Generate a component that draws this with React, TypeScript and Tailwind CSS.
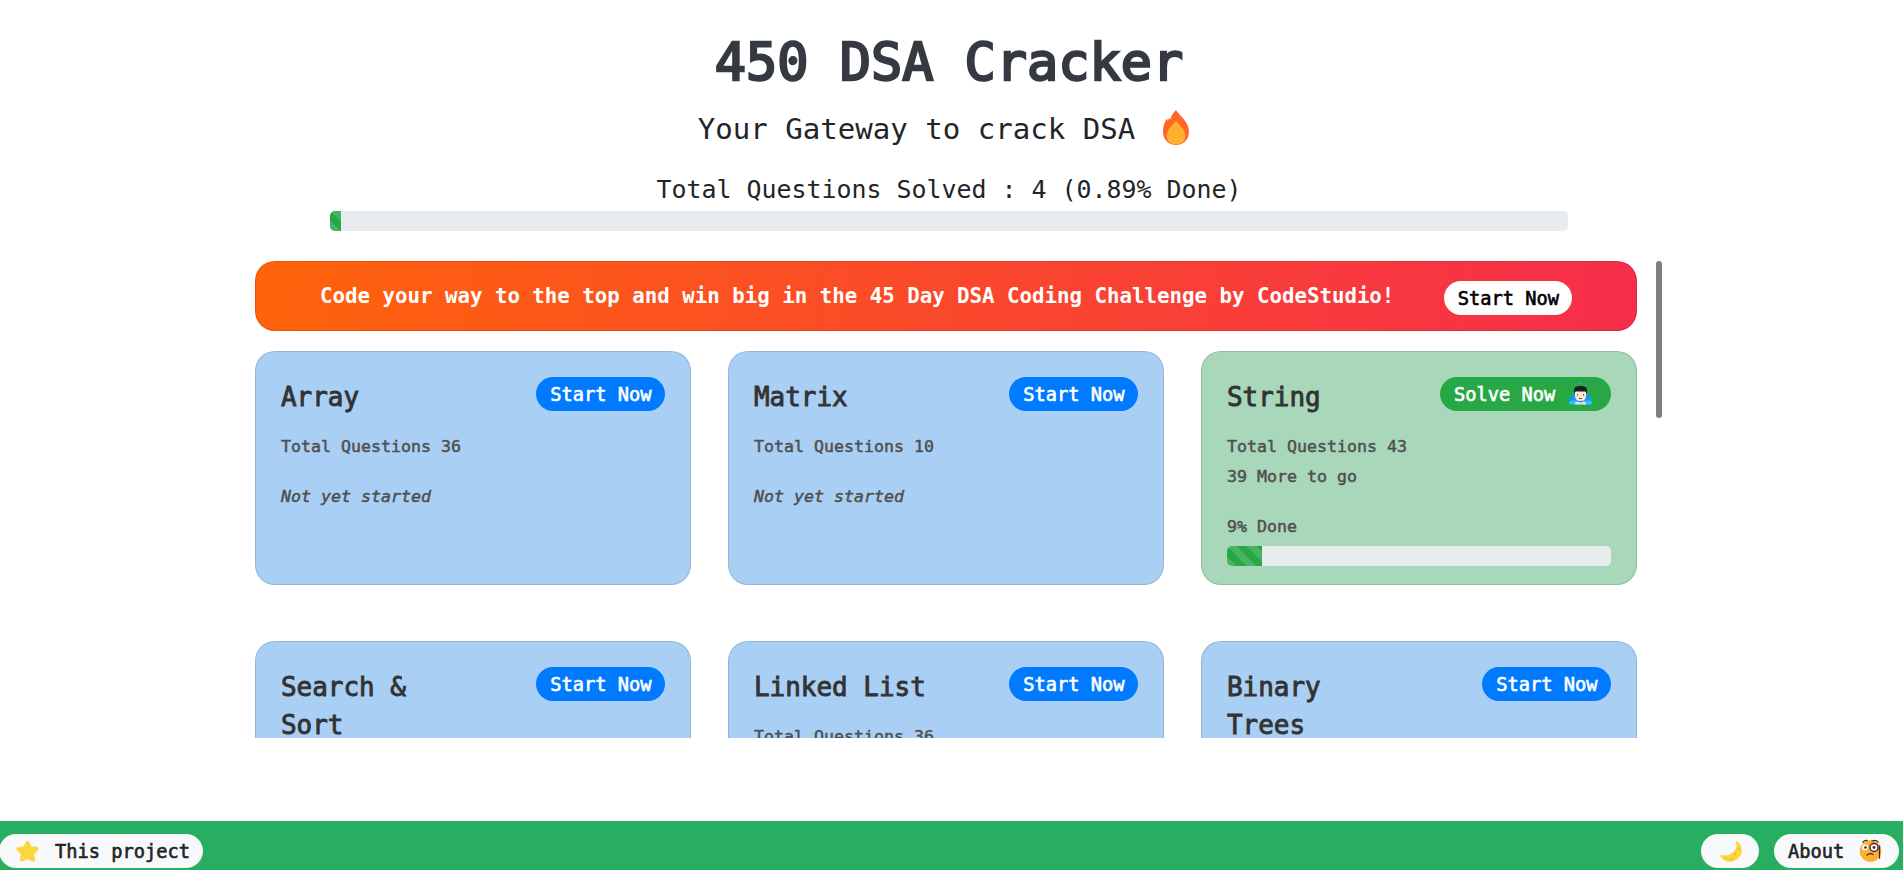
import React from "react";

type Topic = { name: string; total: number; left?: number; percent?: number };

const topics: Topic[] = [
  { name: "Array", total: 36 },
  { name: "Matrix", total: 10 },
  { name: "String", total: 43, left: 39, percent: 9 },
  { name: "Search & Sort", total: 36 },
  { name: "Linked List", total: 36 },
  { name: "Binary Trees", total: 35 },
];

const stripes =
  "bg-[#28a745] bg-[linear-gradient(45deg,rgba(255,255,255,.15)_25%,transparent_25%,transparent_50%,rgba(255,255,255,.15)_50%,rgba(255,255,255,.15)_75%,transparent_75%,transparent)] bg-[length:20px_20px]";

function Progress({ percent }: { percent: number }) {
  return (
    <div className="flex h-5 w-full overflow-hidden rounded-[5px] bg-[#e9ecef]">
      <div className={stripes} style={{ width: `${percent}%` }} />
    </div>
  );
}

function Fire() {
  return (
    <svg viewBox="0 0 26 35" className="h-[35px] w-[26px]">
      <path d="M13 0C16 5 26 12 26 21.500 26 30 20 35 13 35S0 30 0 21.500C0 16 1.500 12 4 8.500l.8 2.500L6 8l1.500 1.500C8 6 10 3 13 0Z" fill="#ff6723" />
      <path d="M13 11c3 4 9.500 8.500 9.500 14.500S18 34.300 13 34.300 3.500 31.500 3.500 25.500 10 15 13 11Z" fill="#ffb02e" />
    </svg>
  );
}

function Bowing() {
  return (
    <svg viewBox="0 0 23 23" className="mb-[3px] h-[23px] w-[23px]">
      <path d="m5 1 2.500.8L6 3.500zM10 0h3l-1.500 2.500zM18 1l-2.500.8L17 3.500z" fill="#3f9bf0" />
      <path d="M4 12C1 14 0 18 0 21q0 1.500 2 1.500h19q2 0 2-1.500c0-3-1-7-4-9Z" fill="#0f9be8" />
      <path d="M0 21q0-2.500 3-2.500h6v4H2q-2 0-2-1.500Zm23 0q0-2.500-3-2.500h-6v4h7q2 0 2-1.500Z" fill="#30c0fa" />
      <path d="M6 20.500q2.500-1.500 5.500 0 3-1.500 5.500 0v2H6Z" fill="#f3ddd0" />
      <path d="M6 9h11v5q0 5-5.500 5T6 14Z" fill="#ffe5d8" />
      <path d="M5 11.500V8q0-4 6.500-4T18 8v3.500l-1.500-2h-10Z" fill="#1c1c1c" />
      <path d="M8.500 12v1.500m6-1.500v1.500M10 16.500h3" stroke="#704d41" fill="none" />
    </svg>
  );
}

function Star() {
  return (
    <svg viewBox="0 0 23 22" className="mb-[3px] h-[22px] w-[23px]">
      <path d="m11.500 3 2.500 5.200 6.500.8-4.500 4.500 1.100 6-5.600-2.500-5.600 2.500 1.100-6L2.500 9 9 8.200Z" fill="#fcd53f" stroke="#fcd53f" strokeWidth="4" strokeLinejoin="round" />
    </svg>
  );
}

function Moon() {
  return (
    <svg viewBox="0 0 22 21" className="mb-[2px] h-[21px] w-[22px]">
      <path d="M17 0c4 3 6 9 4 13-3 8-15 11-20 3-1-1-1-2 0-2 8 2 18-4 15-13 0-1 0-1 1-1Z" fill="#fcd53f" />
      <g fill="#f3c229">
        <circle cx="11" cy="18" r="1.500" />
        <circle cx="15" cy="13" r="1.500" />
        <circle cx="18.500" cy="8" r="1.200" />
        <circle cx="6" cy="17" r="1" />
      </g>
    </svg>
  );
}

function Monocle() {
  return (
    <svg viewBox="0 0 23 23" className="mb-[4px] h-[23px] w-[23px]">
      <circle cx="11.500" cy="12" r="10.800" fill="#ffb02e" />
      <circle cx="6" cy="8.500" r="3" fill="#fff" />
      <circle cx="15" cy="8.500" r="4" fill="#fff" stroke="#402a32" strokeWidth="1.400" />
      <circle cx="6.500" cy="8.500" r="1.300" fill="#402a32" />
      <circle cx="15" cy="8.500" r="1.400" fill="#402a32" />
      <path d="M4 3q2-2 4-1.500M13 2q4-1.500 6 1M20.500 7v12M8 16q3-2.500 6-.5" fill="none" stroke="#402a32" strokeWidth="1.300" strokeLinecap="round" />
    </svg>
  );
}

const pill =
  "flex h-[34px] shrink-0 items-center rounded-full pt-[2px] text-[18.69px] leading-none [-webkit-text-stroke:0.6px]";

function TopicCard({ topic }: { topic: Topic }) {
  const started = topic.percent !== undefined;
  return (
    <section
      className={`h-[234px] rounded-[20px] border border-black/12 px-[25px] pt-[25px] ${started ? "bg-[#a9d7ba]" : "bg-[#aacff5]"}`}
    >
      <div className="flex items-start justify-between">
        <h2 className="w-[180px] pt-[1px] text-[25.95px] leading-[38px] text-[#333] [-webkit-text-stroke:0.9px]">{topic.name}</h2>
        {started ? (
          <button className={`${pill} w-[171px] gap-[14px] bg-[#28a745] pl-[14px] text-white`}>
            Solve Now <Bowing />
          </button>
        ) : (
          <button className={`${pill} w-[129px] justify-center bg-[#007bff] pl-[1px] text-white`}>Start Now</button>
        )}
      </div>
      <div className="mt-[16px] text-[16.61px] leading-[30px] text-[#505050] [-webkit-text-stroke:0.5px]">
        <p>Total Questions {topic.total}</p>
        {started ? (
          <>
            <p>{topic.left} More to go</p>
            <p className="mt-5 mb-1">{topic.percent}% Done</p>
            <Progress percent={topic.percent!} />
          </>
        ) : (
          <p className="mt-5 italic">Not yet started</p>
        )}
      </div>
    </section>
  );
}

export default function App() {
  return (
    <div className="flex h-[870px] flex-col overflow-hidden bg-white font-['DejaVu_Sans_Mono',monospace] text-[#212529]">
      <header className="flex h-[261px] flex-col items-center pr-[5px]">
        <h1 className="mt-[25px] text-[51.9px] leading-[75px] whitespace-nowrap text-[#343a40] [-webkit-text-stroke:2.4px]">450 DSA Cracker</h1>
        <div className="mt-[9px] mr-[11px] flex h-[42px] items-center gap-[28px] text-[29.07px] whitespace-nowrap">
          Your Gateway to crack DSA
          <span className="pb-[5px]">
            <Fire />
          </span>
        </div>
        <p className="mt-[21px] h-[36px] text-[24.92px] leading-[36px] whitespace-nowrap">Total Questions Solved : 4 (0.89% Done)</p>
        <div className="mt-[3px] w-[1238px]">
          <Progress percent={0.89} />
        </div>
      </header>
      <main className="ml-[255px] flex h-[477px] w-[1407px] shrink-0 justify-between overflow-hidden">
        <div className="w-[1382px]">
          <div className="flex h-[70px] items-center rounded-[20px] border border-black/12 bg-[linear-gradient(98deg,#ff630b,#f62e4b)] bg-origin-border pl-[64px]">
            <p className="w-[1074px] pt-[2px] text-[20.76px] font-bold whitespace-nowrap text-white">
              Code your way to the top and win big in the 45 Day DSA Coding Challenge by CodeStudio!
            </p>
            <button className={`${pill} mt-[4px] ml-[50px] w-[128px] justify-center bg-white pl-[1px] text-black`}>Start Now</button>
          </div>
          <div className="mt-5 grid grid-cols-3 gap-x-[37px] gap-y-[56px]">
            {topics.map((t) => (
              <TopicCard key={t.name} topic={t} />
            ))}
          </div>
        </div>
        <div className="h-[157px] w-[6px] rounded-[3px] bg-[#7f7f7f]" />
      </main>
      <footer className="mt-auto flex h-[49px] shrink-0 items-start bg-[#27ae60] pt-[13px] pr-[4px]">
        <button className={`${pill} ml-[-1px] w-[204px] gap-[16px] bg-[#f8f9fa] pl-[17px]`}>
          <Star /> This project
        </button>
        <button className={`${pill} ml-auto w-[58px] bg-[#f8f9fa] pl-[19px]`} aria-label="Dark mode">
          <Moon />
        </button>
        <button className={`${pill} ml-[15px] w-[125px] gap-[15px] bg-[#f8f9fa] pl-[14px]`}>
          About <Monocle />
        </button>
      </footer>
    </div>
  );
}
